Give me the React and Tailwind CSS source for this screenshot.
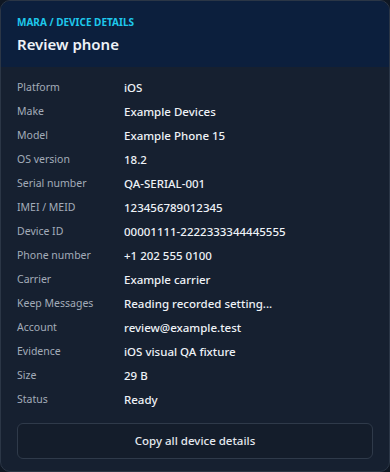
const ROWS = [
  ['Platform', 'iOS'],
  ['Make', 'Example Devices'],
  ['Model', 'Example Phone 15'],
  ['OS version', '18.2'],
  ['Serial number', 'QA-SERIAL-001'],
  ['IMEI / MEID', '123456789012345'],
  ['Device ID', '00001111-2222333344445555'],
  ['Phone number', '+1 202 555 0100'],
  ['Carrier', 'Example carrier'],
  ['Keep Messages', 'Reading recorded setting...'],
  ['Account', 'review@example.test'],
  ['Evidence', 'iOS visual QA fixture'],
  ['Size', '29 B'],
  ['Status', 'Ready'],
]

export default function App() {
  return (
    <div className="w-[390px] h-[472px] bg-[#0f1723] font-['Noto_Sans',sans-serif]">
      <div className="h-full rounded-[10px] border border-[#2b3646] bg-[#162030] overflow-hidden flex flex-col">
        {/* Header */}
        <div className="bg-[#0c1f3d] px-[16px] pt-[14px] h-[66px]">
          <div className="text-[10px] font-bold uppercase text-[#1ec8ec] leading-[14px]">Mara / Device details</div>
          <h1 className="mt-[5px] text-[15px] font-semibold text-[#eef2f7] leading-[20px]">Review phone</h1>
        </div>

        {/* Details */}
        <div className="px-[16px] pt-[9px] flex flex-col">
          {ROWS.map(([k, v]) => (
            <div key={k} className="flex items-center h-[24px]">
              <div className="w-[107px] shrink-0 text-[10.5px] text-[#a3acb9]">{k}</div>
              <div className="text-[11.5px] font-medium text-[#eef2f7]">{v}</div>
            </div>
          ))}
        </div>

        <div className="px-[16px] pt-[11px]">
          <button className="w-full h-[36px] rounded-[6px] border border-[#2f3a4a] bg-[#141d2b] text-[11.5px] font-medium text-[#e5e9ef]">
            Copy all device details
          </button>
        </div>
      </div>
    </div>
  )
}
